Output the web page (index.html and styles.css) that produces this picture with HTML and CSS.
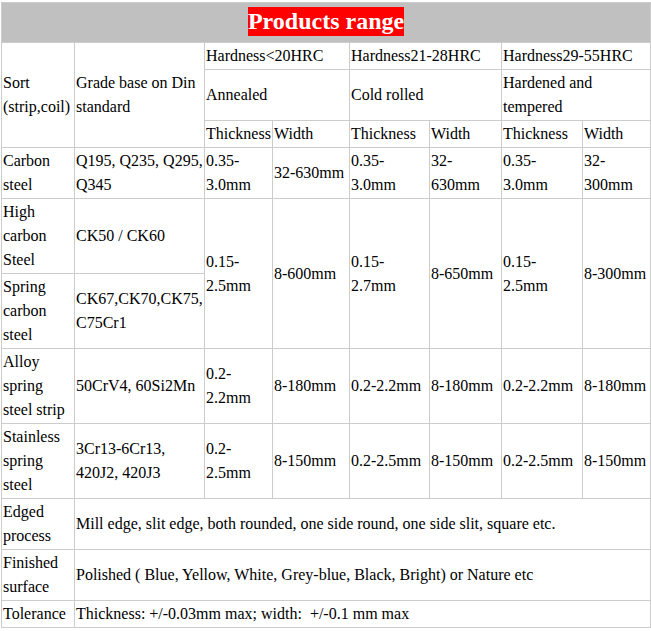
FILE: index.html
```html
<!DOCTYPE html>
<html>
<head>
<meta charset="utf-8">
<link rel="stylesheet" href="styles.css">
</head>
<body>
<div class="wrap">
<table class="range">
<colgroup>
<col class="c1"><col class="c2"><col class="c3"><col class="c4"><col class="c5"><col class="c6"><col class="c7"><col class="c8">
</colgroup>
<tbody>
<tr><td colspan="8" class="title"><span class="title-text">Products range</span></td></tr>
<tr>
<td rowspan="3">Sort (strip,coil)</td>
<td rowspan="3">Grade base on Din standard</td>
<td colspan="2">Hardness&lt;20HRC</td>
<td colspan="2">Hardness21-28HRC</td>
<td colspan="2">Hardness29-55HRC</td>
</tr>
<tr>
<td colspan="2">Annealed</td>
<td colspan="2">Cold rolled</td>
<td colspan="2">Hardened and tempered</td>
</tr>
<tr>
<td>Thickness</td><td>Width</td><td>Thickness</td><td>Width</td><td>Thickness</td><td>Width</td>
</tr>
<tr>
<td>Carbon steel</td><td>Q195, Q235, Q295, Q345</td><td>0.35-3.0mm</td><td>32-630mm</td><td>0.35-3.0mm</td><td>32-630mm</td><td>0.35-3.0mm</td><td>32-300mm</td>
</tr>
<tr>
<td>High carbon Steel</td><td>CK50 / CK60</td>
<td rowspan="2">0.15-2.5mm</td><td rowspan="2">8-600mm</td><td rowspan="2">0.15-2.7mm</td><td rowspan="2">8-650mm</td><td rowspan="2">0.15-2.5mm</td><td rowspan="2">8-300mm</td>
</tr>
<tr>
<td>Spring carbon steel</td><td>CK67,CK70,CK75, C75Cr1</td>
</tr>
<tr>
<td>Alloy spring steel strip</td><td>50CrV4, 60Si2Mn</td><td>0.2-2.2mm</td><td>8-180mm</td><td>0.2-2.2mm</td><td>8-180mm</td><td>0.2-2.2mm</td><td>8-180mm</td>
</tr>
<tr>
<td>Stainless spring steel</td><td>3Cr13-6Cr13, 420J2, 420J3</td><td>0.2-2.5mm</td><td>8-150mm</td><td>0.2-2.5mm</td><td>8-150mm</td><td>0.2-2.5mm</td><td>8-150mm</td>
</tr>
<tr>
<td>Edged process</td><td colspan="7">Mill edge, slit edge, both rounded, one side round, one side slit, square etc.</td>
</tr>
<tr>
<td>Finished surface</td><td colspan="7">Polished ( Blue, Yellow, White, Grey-blue, Black, Bright) or Nature etc</td>
</tr>
<tr>
<td>Tolerance</td><td colspan="7">Thickness: +/-0.03mm max; width:&nbsp; +/-0.1 mm max</td>
</tr>
</tbody>
</table>
</div>
</body>
</html>
```
FILE: styles.css
```css
html, body {
  margin: 0;
  padding: 0;
  background: #ffffff;
}
.wrap {
  padding: 2px 0 0 1px;
}
.range {
  border-collapse: collapse;
  table-layout: fixed;
  width: 649px;
  font-family: "Liberation Serif", "Times New Roman", serif;
  font-size: 16px;
  line-height: 24px;
  color: #000;
}
.range td {
  border: 1px solid #cccccc;
  padding: 1px;
  vertical-align: middle;
  text-align: left;
}
.c1 { width: 73px; }
.c2 { width: 130px; }
.c3 { width: 68px; }
.c4 { width: 77px; }
.c5 { width: 80px; }
.c6 { width: 72px; }
.c7 { width: 81px; }
.c8 { width: 68px; }
.range td.title {
  background: #c0c0c0;
  text-align: center;
  padding: 4px 1px 6px;
  line-height: 29px;
}
.title-text {
  display: inline-block;
  background: #ff0000;
  color: #ffffff;
  font-weight: bold;
  font-size: 24px;
  line-height: 29px;
  vertical-align: top;
}
```
